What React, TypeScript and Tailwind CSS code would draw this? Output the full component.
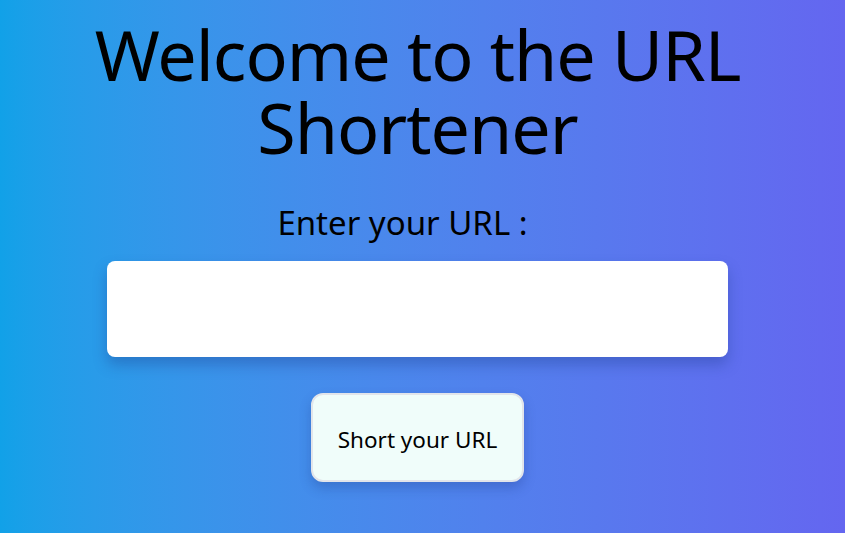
export default function App() {
  return (
    <div
      className="min-h-screen w-full bg-gradient-to-r from-[#11a1e8] to-[#6466f0] flex flex-col items-center pr-[10px]"
      style={{ fontFamily: '"Noto Sans", "Open Sans", sans-serif' }}
    >
      <h1 className="mt-[18px] text-[70px] leading-[73px] text-black text-center tracking-[-1px]">
        Welcome to the URL
        <br />
        Shortener
      </h1>
      <label className="mt-[39px] text-[33px] leading-[40px] text-black mr-[30px]">Enter your URL :</label>
      <input
        type="text"
        className="mt-[18px] w-[621px] h-[96px] bg-white rounded-[8px] shadow-[0_8px_14px_rgba(30,60,140,0.35)] outline-none border-0 px-4"
      />
      <button className="mt-[36px] w-[213px] h-[89px] bg-[#f0fdfa] border-2 border-[#e2e5ea] rounded-[12px] text-[22.5px] pt-[4px] text-black shadow-[0_6px_12px_rgba(30,60,140,0.3)]">
        Short your URL
      </button>
    </div>
  );
}
